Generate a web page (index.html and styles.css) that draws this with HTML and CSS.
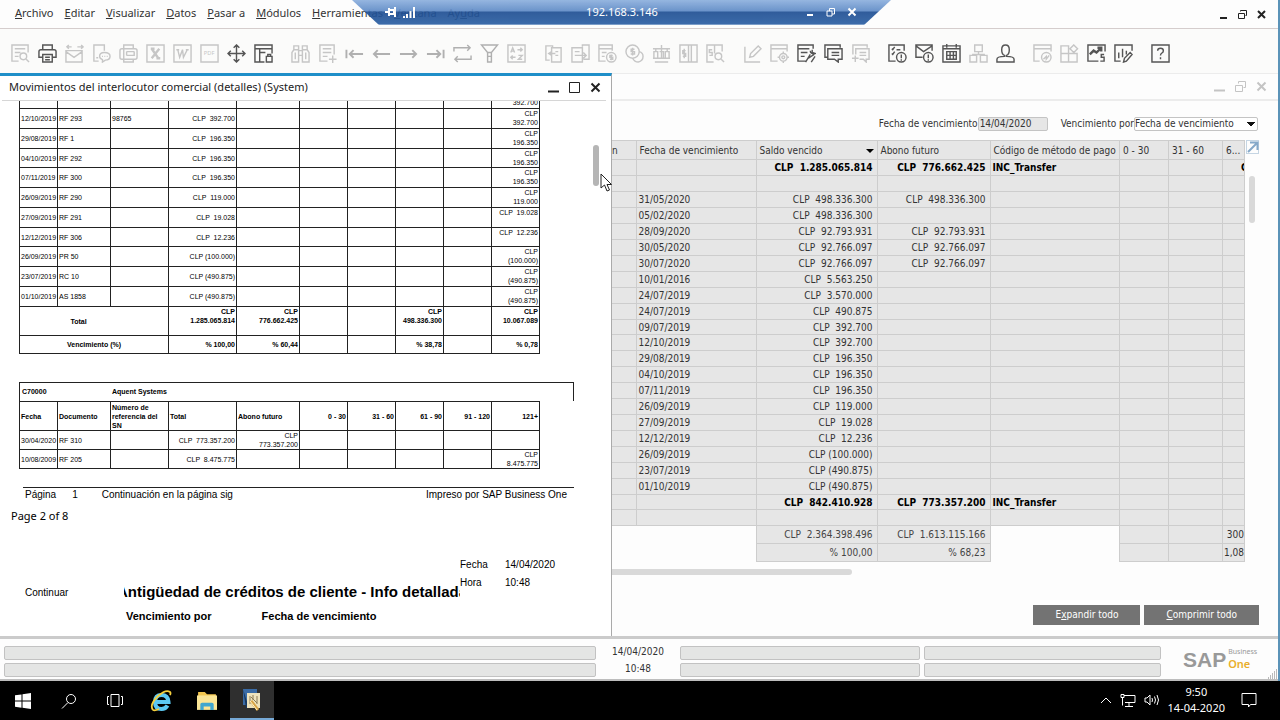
FILE: index.html
```html
<!DOCTYPE html>
<html lang="es">
<head>
    <meta charset="UTF-8">
    <meta name="viewport" content="width=device-width, initial-scale=1.0">
    <title>SAP Business One</title>
    <link rel="stylesheet" href="styles.css">
</head>
<body>
    <!-- Remote desktop connection bar -->
    <div class="remote-bar">
        <div class="remote-tools">
            <svg width="12" height="12" viewBox="0 0 12 12"><path d="M0 6h4M4 2v8M4 4h5v4H4M10 1v10"/></svg>
            <svg width="12" height="12" viewBox="0 0 12 12"><path d="M1 12V10M4 12V8M7.500 12V5M11 12V1"/></svg>
        </div>
        <span class="remote-host">192.168.3.146</span>
        <div class="remote-controls">
            <button type="button" aria-label="Minimizar"><svg width="10" height="10" viewBox="0 0 10 10"><path d="M2 8h6"/></svg></button>
            <button type="button" aria-label="Restaurar"><svg width="10" height="10" viewBox="0 0 10 10"><path class="thin" d="M1 4h5v5H1zM3.500 4V1.500h5V7H6"/></svg></button>
            <button type="button" aria-label="Cerrar"><svg width="10" height="10" viewBox="0 0 10 10"><path d="M1.500 1.500l7 7M8.500 1.500l-7 7"/></svg></button>
        </div>
    </div>

    <div class="app">
        <header class="menu-bar">
            <nav class="menu">
                <a href="#"><u>A</u>rchivo</a>
                <a href="#"><u>E</u>ditar</a>
                <a href="#"><u>V</u>isualizar</a>
                <a href="#"><u>D</u>atos</a>
                <a href="#"><u>P</u>asar a</a>
                <a href="#"><u>M</u>ódulos</a>
                <a href="#"><u>H</u>erramientas</a>
                <a href="#"><u>V</u>entana</a>
                <a href="#">Ay<u>u</u>da</a>
            </nav>
            <div class="window-controls">
                <button type="button" aria-label="Minimizar"><svg width="11" height="11" viewBox="0 0 11 11"><path d="M2 9h7"/></svg></button>
                <button type="button" aria-label="Restaurar"><svg width="11" height="11" viewBox="0 0 11 11"><path class="thin" d="M1.500 4.500h6v5h-6zM3.500 2.500v-1h6v5h-1"/></svg></button>
                <button type="button" aria-label="Cerrar"><svg width="11" height="11" viewBox="0 0 11 11"><path d="M2 2l7 7M9 2l-7 7"/></svg></button>
            </div>
        </header>

        <div class="toolbar">
            <div class="tool-group">
                <button type="button" class="tool off" aria-label="Vista preliminar"><svg viewBox="0 0 20 20"><path d="M8 18H1V1h17v8M4 5h11M4 9h6M4 13h4"/><circle cx="13" cy="13" r="3.500"/><path d="M16 16l3 3"/></svg></button>
                <button type="button" class="tool" aria-label="Imprimir"><svg viewBox="0 0 20 20"><path d="M5 6V1h10v5M5 14H1V8q0-2 2-2h14q2 0 2 2v6h-4M5 11h10v8H5zM7.500 14h5M7.500 16.500h5"/></svg></button>
                <button type="button" class="tool off" aria-label="Correo"><svg viewBox="0 0 20 20"><path d="M1 7h17v12H1zM1 8l8.500 6L18 8M2 3h5M13 3h6M4 1L2 3l2 2M17 1l2 2-2 2"/></svg></button>
                <button type="button" class="tool off" aria-label="SMS"><svg viewBox="0 0 20 20"><path d="M7 18H2V1h11v6M4.500 14.500h2M13 9q6 0 6 4t-5 4l-3 2v-2.500q-3-1-3-3.500 0-4 5-4zM10.500 13h1M13 13h1M15.500 13h1"/></svg></button>
                <button type="button" class="tool off" aria-label="Fax"><svg viewBox="0 0 20 20"><path d="M5 5V1h10v4M3 5h14q2 0 2 2v7q0 2-2 2H3q-2 0-2-2V7q0-2 2-2zM5 5v14h10v-3M8 8h8M8 12h8v-4M8 8v4"/></svg></button>
                <button type="button" class="tool off" aria-label="Excel"><svg viewBox="0 0 20 20"><path d="M1 1h18v18H1z"/><path class="thick" d="M6 5l7 10M14 5L6 15M5 5h4M11 15h4"/></svg></button>
                <button type="button" class="tool off" aria-label="Word"><svg viewBox="0 0 20 20"><path d="M1 1h18v18H1zM5 6l2 8 3-8 1 8 4-8M3.500 6h3M13.500 6h3"/></svg></button>
                <button type="button" class="tool off" aria-label="PDF"><svg viewBox="0 0 20 20"><path d="M1 1h18v18H1z"/><text x="4" y="12">PDF</text></svg></button>
                <button type="button" class="tool" aria-label="Mover"><svg viewBox="0 0 20 20"><path d="M10 1v18M1 10h18M7 4l3-3 3 3M7 16l3 3 3-3M4 7l-3 3 3 3M16 7l3 3-3 3"/></svg></button>
                <button type="button" class="tool" aria-label="Bloquear pantalla"><svg viewBox="0 0 20 20"><path d="M19 10V1H1v18h10M1 5h18M6 5v14M6 9h6M13 13h6v6h-6zM14.500 13v-2h3v2"/></svg></button>
            </div>
            <div class="tool-group">
                <button type="button" class="tool off" aria-label="Buscar"><svg viewBox="0 0 20 20"><path d="M1 19V9l2-3V2h5v17zM19 19V9l-2-3V2h-5v17zM8 7h4M8 12h4M3 6h5M12 6h5M4.500 9v7M15.500 9v7"/></svg></button>
                <button type="button" class="tool off" aria-label="Crear"><svg viewBox="0 0 20 20"><path d="M10 18H2V1h15v10M5 5h9M5 9h9M5 13h5M15.500 12v8M11.500 16h8"/></svg></button>
                <button type="button" class="tool off arrow" aria-label="Primer registro"><svg viewBox="0 0 20 20"><path d="M1.500 6v9M5 10.500h14M9 6.500l-4 4 4 4"/></svg></button>
                <button type="button" class="tool off arrow" aria-label="Registro anterior"><svg viewBox="0 0 20 20"><path d="M2 10.500h17M6 6.500l-4 4 4 4"/></svg></button>
                <button type="button" class="tool off arrow" aria-label="Registro siguiente"><svg viewBox="0 0 20 20"><path d="M1 10.500h17M14 6.500l4 4-4 4"/></svg></button>
                <button type="button" class="tool off arrow" aria-label="Último registro"><svg viewBox="0 0 20 20"><path d="M18.500 6v9M1 10.500h14M11 6.500l4 4-4 4"/></svg></button>
                <button type="button" class="tool off dark" aria-label="Actualizar"><svg viewBox="0 0 20 20"><path d="M1 8V4h17M15 1l3 3-3 3M19 12v4H2M5 13l-3 3 3 3"/></svg></button>
                <button type="button" class="tool off dark" aria-label="Filtrar"><svg viewBox="0 0 20 20"><path d="M1.500 1h17L12 9v10H8V9zM8 9h4M8 13h4"/></svg></button>
                <button type="button" class="tool off" aria-label="Clasificar"><svg viewBox="0 0 20 20"><path d="M1 1h18v18H1zM4 9l2-5 2 5M5 7.500h2M11 6h5M14 4l2 2-2 2M9 14H4M6 12l-2 2 2 2M12 12h4l-4 4h4"/></svg></button>
            </div>
            <div class="tool-group">
                <button type="button" class="tool off" aria-label="Documento base"><svg viewBox="0 0 20 20"><path d="M6 17H2V2h7v2M8 4h10v15H8zM5 10h7M8 8l-3 2 3 2M12 8h3M12 12h3"/></svg></button>
                <button type="button" class="tool off" aria-label="Documento destino"><svg viewBox="0 0 20 20"><path d="M12 3V1h7v15h-6M1 4h11v15H1zM4 8h5M4 12h12M13 9l3 3-3 3"/></svg></button>
                <button type="button" class="tool off" aria-label="Beneficio bruto"><svg viewBox="0 0 20 20"><path d="M8 18H1V1h14v6M1 5h14M4 9h5M4 13h3"/><circle cx="14" cy="14" r="5"/><path d="M15.500 12h-3v2h3v2h-3M14 11v6"/></svg></button>
                <button type="button" class="tool off" aria-label="Medios de pago"><svg viewBox="0 0 20 20"><circle cx="8" cy="8" r="7"/><path d="M15 8q4 1 4 5 0 5-5 6-4 0-6-4M10 5.500H6.500v2.500h3.500v2.500H6M8 4v8"/></svg></button>
                <button type="button" class="tool off" aria-label="Cálculo de volumen"><svg viewBox="0 0 20 20"><path d="M1 5h18M10 1v14M1 15h18M3 19h14M4 5v3M16 5v3M2 8h4v7H2zM14 8h4v7h-4zM8 8h4v7"/></svg></button>
                <button type="button" class="tool off" aria-label="Asiento"><svg viewBox="0 0 20 20"><path d="M1 1h18v18H1zM10 1v18M7 7H4v3h3v3H4M5.500 5v10M13 1v18"/></svg></button>
                <button type="button" class="tool off" aria-label="Detalle de asiento"><svg viewBox="0 0 20 20"><path d="M8 19H1V1h16v7M9 1v9M6.500 6h-3v3h3v3h-3"/><circle cx="13" cy="13" r="3.500"/><path d="M16 16l3 3"/></svg></button>
            </div>
            <div class="tool-group">
                <button type="button" class="tool off" aria-label="Editar diseño"><svg viewBox="0 0 20 20"><path d="M2 3v16h16M7 14l1-4 8-8 3 3-8 8z"/></svg></button>
                <button type="button" class="tool off" aria-label="Parametrizaciones"><svg viewBox="0 0 20 20"><path d="M8 18H1V1h17v7M1 5h17"/><circle cx="14" cy="14" r="4"/><circle cx="14" cy="14" r="1.500"/><path d="M14 8v2M14 18v2M8 14h2M18 14h2"/></svg></button>
                <button type="button" class="tool" aria-label="Diseñador de formularios"><svg viewBox="0 0 20 20"><path d="M9 18H1V1h16v4M1 5h12M4 9h7M4 13h4M9 19l5-8M14 7q0 4 5 3l-3-1V6M12 15l6-4M15 19l4-6"/></svg></button>
                <button type="button" class="tool" aria-label="Mensajes"><svg viewBox="0 0 20 20"><path d="M4 14H1V1h16v3M4 5h15v11h-4v3l-4-3H4zM8 9h8M8 12h8"/></svg></button>
                <button type="button" class="tool off" aria-label="Nuevo mensaje"><svg viewBox="0 0 20 20"><path d="M2 11V1h15v3M5 11V5h14v11h-3v3l-3-3H9M9 9h7M9 12h7M1 15h7M4.500 12v7"/></svg></button>
            </div>
            <div class="tool-group">
                <button type="button" class="tool" aria-label="Actividades"><svg viewBox="0 0 20 20"><path d="M8 18H1V1h16v6M4 5l1 1 2-3M4 10l1 1 2-3M9 6h4"/><circle cx="14" cy="14" r="5"/><path d="M14 11v4M14 16v1.500"/></svg></button>
                <button type="button" class="tool" aria-label="Alertas"><svg viewBox="0 0 20 20"><path d="M8 14H1V1h17v6M1 2l8 6 9-6"/><circle cx="14" cy="14" r="5"/><path d="M14 11v4M14 16v1.500"/></svg></button>
                <button type="button" class="tool" aria-label="Calendario"><svg viewBox="0 0 20 20"><path d="M1 2h18v17H1zM1 5h18M5 0v4M15 0v4M5 8h10v8H5zM5 12h10M8.500 8v8M12 8v8"/></svg></button>
                <button type="button" class="tool off" aria-label="Mapa de relaciones"><svg viewBox="0 0 20 20"><path d="M6 1h8v7H6zM1 12h7v7H1zM12 12h7v7h-7zM10 8v3M4 12v-1h12v1"/></svg></button>
                <button type="button" class="tool" aria-label="Empleado"><svg viewBox="0 0 20 20"><path d="M10 1q4 0 4 5t-3 6v1q8 0 8 3v3H1v-3q0-3 8-3v-1Q6 11 6 6t4-5z"/></svg></button>
            </div>
            <div class="tool-group">
                <button type="button" class="tool off" aria-label="Tablero"><svg viewBox="0 0 20 20"><path d="M7 18H1V1h18v7M1 5h18"/><circle cx="14" cy="14" r="5"/><path d="M11 16l3-3v3l3-4"/></svg></button>
                <button type="button" class="tool off" aria-label="Widgets"><svg viewBox="0 0 20 20"><path d="M1 2h8v8H1zM1 10h8v9H1zM9 10h9v9H9zM14.500 1l4 4-4 4-4-4z"/></svg></button>
                <button type="button" class="tool" aria-label="Análisis"><svg viewBox="0 0 20 20"><path d="M12 18H1V1h18v7M18 11h-3v3h3v4h-4"/><path class="thick" d="M3 11l4-4 3 2 5-5M11 4h4v4"/></svg></button>
                <button type="button" class="tool" aria-label="Gráficos"><svg viewBox="0 0 20 20"><path d="M7 18H1V1h18v6M5 15V9M9 14V5M13 11V7M10 19l1-4 6-6 2 2-6 7z"/></svg></button>
            </div>
            <div class="tool-group">
                <button type="button" class="tool" aria-label="Ayuda"><svg viewBox="0 0 20 20"><path d="M1 1h18v18H1zM7 7q0-2.500 3-2.500t3 2.500q0 1.500-1.500 2.500T10 12M10 14v2"/></svg></button>
            </div>
        </div>

        <main class="workspace">
            <section class="report-window">
                <div class="title-bar">
                    <h1>Movimientos del interlocutor comercial (detalles) (System)</h1>
                    <div class="window-controls">
                        <button type="button" aria-label="Minimizar"><svg width="11" height="11" viewBox="0 0 11 11"><path d="M0 9.500h11"/></svg></button>
                        <button type="button" aria-label="Maximizar"><svg width="11" height="11" viewBox="0 0 11 11"><path class="thin" d="M.5.500h10v10H.5z"/></svg></button>
                        <button type="button" aria-label="Cerrar"><svg width="11" height="11" viewBox="0 0 11 11"><path d="M1.500 1.500l8 8M9.500 1.500l-8 8"/></svg></button>
                    </div>
                </div>
                <div class="report-view">
                    <div class="report-page">
                        <table class="report-table scrolled">
                            <colgroup><col class="w-date"><col class="w-doc"><col class="w-ref"><col class="w-total"><col class="w-future"><col class="w-age"><col class="w-age"><col class="w-age"><col class="w-age"><col class="w-age"></colgroup>
                            <tbody>
                                <tr><td>09/07/2019</td><td>RF 289</td><td></td><td>CLP  392.700</td><td></td><td></td><td></td><td></td><td></td><td>CLP<br>392.700</td></tr>
                                <tr><td>12/10/2019</td><td>RF 293</td><td>98765</td><td>CLP  392.700</td><td></td><td></td><td></td><td></td><td></td><td>CLP<br>392.700</td></tr>
                                <tr><td>29/08/2019</td><td>RF 1</td><td></td><td>CLP  196.350</td><td></td><td></td><td></td><td></td><td></td><td>CLP<br>196.350</td></tr>
                                <tr><td>04/10/2019</td><td>RF 292</td><td></td><td>CLP  196.350</td><td></td><td></td><td></td><td></td><td></td><td>CLP<br>196.350</td></tr>
                                <tr><td>07/11/2019</td><td>RF 300</td><td></td><td>CLP  196.350</td><td></td><td></td><td></td><td></td><td></td><td>CLP<br>196.350</td></tr>
                                <tr><td>26/09/2019</td><td>RF 290</td><td></td><td>CLP  119.000</td><td></td><td></td><td></td><td></td><td></td><td>CLP<br>119.000</td></tr>
                                <tr><td>27/09/2019</td><td>RF 291</td><td></td><td>CLP  19.028</td><td></td><td></td><td></td><td></td><td></td><td>CLP  19.028</td></tr>
                                <tr><td>12/12/2019</td><td>RF 306</td><td></td><td>CLP  12.236</td><td></td><td></td><td></td><td></td><td></td><td>CLP  12.236</td></tr>
                                <tr><td>26/09/2019</td><td>PR 50</td><td></td><td>CLP (100.000)</td><td></td><td></td><td></td><td></td><td></td><td>CLP<br>(100.000)</td></tr>
                                <tr><td>23/07/2019</td><td>RC 10</td><td></td><td>CLP (490.875)</td><td></td><td></td><td></td><td></td><td></td><td>CLP<br>(490.875)</td></tr>
                                <tr><td>01/10/2019</td><td>AS 1858</td><td></td><td>CLP (490.875)</td><td></td><td></td><td></td><td></td><td></td><td>CLP<br>(490.875)</td></tr>
                            </tbody>
                            <tfoot>
                                <tr class="sum"><th colspan="3">Total</th><td>CLP<br>1.285.065.814</td><td>CLP<br>776.662.425</td><td></td><td></td><td>CLP<br>498.336.300</td><td></td><td>CLP<br>10.067.089</td></tr>
                                <tr class="percent"><th colspan="3">Vencimiento (%)</th><td>% 100,00</td><td>% 60,44</td><td></td><td></td><td>% 38,78</td><td></td><td>% 0,78</td></tr>
                            </tfoot>
                        </table>

                        <div class="partner">
                            <span class="partner-code">C70000</span>
                            <span>Aquent Systems</span>
                        </div>
                        <table class="report-table compact">
                            <colgroup><col class="w-date"><col class="w-doc"><col class="w-ref"><col class="w-total"><col class="w-future"><col class="w-age"><col class="w-age"><col class="w-age"><col class="w-age"><col class="w-age"></colgroup>
                            <thead>
                                <tr><th>Fecha</th><th>Documento</th><th>Número de referencia del SN</th><th>Total</th><th>Abono futuro</th><th>0 - 30</th><th>31 - 60</th><th>61 - 90</th><th>91 - 120</th><th>121+</th></tr>
                            </thead>
                            <tbody>
                                <tr><td>30/04/2020</td><td>RF 310</td><td></td><td>CLP  773.357.200</td><td>CLP<br>773.357.200</td><td></td><td></td><td></td><td></td><td></td></tr>
                                <tr><td>10/08/2009</td><td>RF 205</td><td></td><td>CLP  8.475.775</td><td></td><td></td><td></td><td></td><td></td><td>CLP<br>8.475.775</td></tr>
                            </tbody>
                        </table>

                        <div class="page-footer">
                            <span>Página</span>
                            <span>1</span>
                            <span>Continuación en la página sig</span>
                            <span class="printed-by">Impreso por SAP Business One</span>
                        </div>
                    </div>
                    <p class="page-count">Page 2 of 8</p>

                    <div class="next-page">
                        <span class="continued">Continuar</span>
                        <div class="next-title">
                            <h2><span>Antigüedad de créditos de cliente - Info detallada</span></h2>
                            <p><span>Vencimiento por</span><span>Fecha de vencimiento</span></p>
                        </div>
                        <dl class="printed-at">
                            <dt>Fecha</dt><dd>14/04/2020</dd>
                            <dt>Hora</dt><dd>10:48</dd>
                        </dl>
                    </div>
                    <div class="scroll-thumb report-thumb"></div>
                </div>
            </section>

            <section class="aging-window">
                <div class="title-bar">
                    <div class="window-controls">
                        <button type="button" aria-label="Minimizar"><svg width="11" height="11" viewBox="0 0 11 11"><path d="M0 9.500h11"/></svg></button>
                        <button type="button" aria-label="Restaurar"><svg width="11" height="11" viewBox="0 0 11 11"><path class="thin" d="M.5 4.500h7v6h-7zM3.500 2.500v-2h7v6h-2"/></svg></button>
                        <button type="button" aria-label="Cerrar"><svg width="11" height="11" viewBox="0 0 11 11"><path d="M1.500 1.500l8 8M9.500 1.500l-8 8"/></svg></button>
                    </div>
                </div>
                <form class="filters">
                    <label for="dueDate">Fecha de vencimiento</label>
                    <input id="dueDate" type="text" value="14/04/2020" readonly>
                    <label for="dueBy" class="second">Vencimiento por</label>
                    <select id="dueBy"><option>Fecha de vencimiento</option></select>
                </form>
                <div class="grid-area">
                    <table class="aging-table">
                        <colgroup><col class="a-first"><col class="a-due"><col class="a-balance"><col class="a-future"><col><col class="a-30"><col class="a-60"><col class="a-90"></colgroup>
                        <thead>
                            <tr><th>n</th><th>Fecha de vencimiento</th><th class="sorted">Saldo vencido</th><th>Abono futuro</th><th>Código de método de pago</th><th>0 - 30</th><th>31 - 60</th><th>6...</th></tr>
                        </thead>
                        <tbody>
                            <tr class="group"><td></td><td></td><td>CLP  1.285.065.814</td><td>CLP  776.662.425</td><td>INC_Transfer</td><td></td><td></td><td class="cut">CLP</td></tr>
                            <tr><td></td><td></td><td></td><td></td><td></td><td></td><td></td><td></td></tr>
                            <tr><td></td><td>31/05/2020</td><td>CLP  498.336.300</td><td>CLP  498.336.300</td><td></td><td></td><td></td><td></td></tr>
                            <tr><td></td><td>05/02/2020</td><td>CLP  498.336.300</td><td></td><td></td><td></td><td></td><td></td></tr>
                            <tr><td></td><td>28/09/2020</td><td>CLP  92.793.931</td><td>CLP  92.793.931</td><td></td><td></td><td></td><td></td></tr>
                            <tr><td></td><td>30/05/2020</td><td>CLP  92.766.097</td><td>CLP  92.766.097</td><td></td><td></td><td></td><td></td></tr>
                            <tr><td></td><td>30/07/2020</td><td>CLP  92.766.097</td><td>CLP  92.766.097</td><td></td><td></td><td></td><td></td></tr>
                            <tr><td></td><td>10/01/2016</td><td>CLP  5.563.250</td><td></td><td></td><td></td><td></td><td></td></tr>
                            <tr><td></td><td>24/07/2019</td><td>CLP  3.570.000</td><td></td><td></td><td></td><td></td><td></td></tr>
                            <tr><td></td><td>24/07/2019</td><td>CLP  490.875</td><td></td><td></td><td></td><td></td><td></td></tr>
                            <tr><td></td><td>09/07/2019</td><td>CLP  392.700</td><td></td><td></td><td></td><td></td><td></td></tr>
                            <tr><td></td><td>12/10/2019</td><td>CLP  392.700</td><td></td><td></td><td></td><td></td><td></td></tr>
                            <tr><td></td><td>29/08/2019</td><td>CLP  196.350</td><td></td><td></td><td></td><td></td><td></td></tr>
                            <tr><td></td><td>04/10/2019</td><td>CLP  196.350</td><td></td><td></td><td></td><td></td><td></td></tr>
                            <tr><td></td><td>07/11/2019</td><td>CLP  196.350</td><td></td><td></td><td></td><td></td><td></td></tr>
                            <tr><td></td><td>26/09/2019</td><td>CLP  119.000</td><td></td><td></td><td></td><td></td><td></td></tr>
                            <tr><td></td><td>27/09/2019</td><td>CLP  19.028</td><td></td><td></td><td></td><td></td><td></td></tr>
                            <tr><td></td><td>12/12/2019</td><td>CLP  12.236</td><td></td><td></td><td></td><td></td><td></td></tr>
                            <tr><td></td><td>26/09/2019</td><td>CLP (100.000)</td><td></td><td></td><td></td><td></td><td></td></tr>
                            <tr><td></td><td>23/07/2019</td><td>CLP (490.875)</td><td></td><td></td><td></td><td></td><td></td></tr>
                            <tr><td></td><td>01/10/2019</td><td>CLP (490.875)</td><td></td><td></td><td></td><td></td><td></td></tr>
                            <tr class="group"><td></td><td></td><td>CLP  842.410.928</td><td>CLP  773.357.200</td><td>INC_Transfer</td><td></td><td></td><td></td></tr>
                            <tr><td></td><td></td><td></td><td></td><td></td><td></td><td></td><td></td></tr>
                        </tbody>
                        <tfoot>
                            <tr><td class="blank" colspan="2"></td><td>CLP  2.364.398.496</td><td>CLP  1.613.115.166</td><td class="blank"></td><td></td><td></td><td class="end">300</td></tr>
                            <tr><td class="blank" colspan="2"></td><td>% 100,00</td><td>% 68,23</td><td class="blank"></td><td></td><td></td><td class="end">1,08</td></tr>
                        </tfoot>
                    </table>
                    <div class="grid-side">
                        <button type="button" class="expand" aria-label="Ampliar"><svg width="12" height="12" viewBox="0 0 12 12"><path d="M1 11l9-9M3 1.500h7.500V9"/></svg></button>
                        <div class="scroll-thumb grid-thumb"></div>
                    </div>
                </div>
                <div class="h-thumb"></div>
                <div class="actions">
                    <button type="button">E<u>x</u>pandir todo</button>
                    <button type="button"><u>C</u>omprimir todo</button>
                </div>
            </section>

            <svg class="pointer" width="12" height="19" viewBox="0 0 12 19"><path d="M1 1v14l3.500-3 2.500 6 2.500-1L7 11.500h4.500z"/></svg>
        </main>

        <footer class="status-bar">
            <div class="status-fields">
                <input type="text" aria-label="Mensaje" readonly>
                <span>14/04/2020</span>
                <input type="text" aria-label="Estado 1" readonly>
                <input type="text" aria-label="Estado 2" readonly>
                <input type="text" aria-label="Detalle" readonly>
                <span>10:48</span>
                <input type="text" aria-label="Estado 3" readonly>
                <input type="text" aria-label="Estado 4" readonly>
            </div>
            <div class="logo">
                <strong>SAP</strong>
                <span class="logo-name"><span>Business</span><b>One</b></span>
            </div>
            <svg class="grip" width="12" height="12" viewBox="0 0 12 12"><path d="M2 11h10M4 9h8M6 7h6M8 5h4M10 3h2"/></svg>
        </footer>
    </div>

    <div class="taskbar">
        <button type="button" class="task" aria-label="Inicio"><svg width="16" height="16" viewBox="0 0 16 16"><path fill="#fff" d="M0 2.300L6.500 1.400v6.200H0zM7.500 1.200L16 0v7.600H7.500zM0 8.500h6.500v6.200L0 13.800zM7.500 8.500H16V16l-8.500-1.200z"/></svg></button>
        <button type="button" class="task" aria-label="Buscar"><svg class="line" width="16" height="16" viewBox="0 0 16 16"><circle cx="10" cy="6" r="4.500"/><path d="M7 9.500L1 15.500"/></svg></button>
        <button type="button" class="task" aria-label="Vista de tareas"><svg class="line" width="18" height="16" viewBox="0 0 18 16"><path d="M5 1.500h8v12H5zM3 3.500H1.500v8H3M15 3.500h1.500v8H15"/></svg></button>
        <button type="button" class="task" aria-label="Internet Explorer"><svg width="22" height="22" viewBox="0 0 22 22"><path class="ie-letter" d="M5 12h13.500Q18 5 11.500 5T5 12t6.500 7q4 0 6-3.500"/><path class="ie-ring" d="M3 20Q-1 15 8 6 16-1 20 2q1 1 0 3M3 20q2 1 6-1"/></svg></button>
        <button type="button" class="task" aria-label="Explorador"><svg width="20" height="20" viewBox="0 0 18 18"><path fill="#f3c64f" d="M1 1h6l2 2h8v4H1z"/><path fill="#fbe596" d="M0 4h18v13H0z"/><path fill="#40a6cf" d="M3 17v-5q0-1.500 1.500-1.500h9Q15 10.500 15 12v5h-3v-3H6v3z"/></svg></button>
        <button type="button" class="task active" aria-label="SAP Business One"><svg width="20" height="22" viewBox="0 0 20 22"><path fill="#3a6ba5" d="M1 0h14v16H1z"/><path fill="#17375f" d="M1 0l6 19H4z"/><path fill="#eee3bd" d="M5 4h13v15H5z"/><path class="sap-lines" d="M8 7v8M11 6v5M15 7v8M9 8l6 6"/><path class="sap-pencil" d="M9 12l7 9"/><path class="sap-shine" d="M8 12l7 9"/></svg></button>
        <div class="tray">
            <svg class="line" width="12" height="10" viewBox="0 0 12 10"><path d="M1 8l5-5 5 5"/></svg>
            <svg class="line" width="16" height="16" viewBox="0 0 16 16"><path d="M4 3.500h11v7H5M1 2.500h3v3H1zM2.500 5.500v8M9 11v3M5 14.500h8"/></svg>
            <svg class="line" width="16" height="14" viewBox="0 0 16 14"><path d="M1 5h2l3-3v10L3 9H1zM8 5q1 2 0 4M10.500 3.500q2 3.500 0 7M13 2q3 5 0 10"/></svg>
            <div class="clock"><span>9:50</span><span>14-04-2020</span></div>
            <svg class="line" width="16" height="16" viewBox="0 0 16 16"><path d="M1 1.500h14v11H9.500L7.500 15v-2.500H1z"/></svg>
        </div>
    </div>
</body>
</html>
```

FILE: styles.css
```css
:root {
    --ui-font: "Noto Sans", "Open Sans", sans-serif;
    --grid-font: "DejaVu Sans Condensed", "Noto Sans", sans-serif;
    --report-font: "Liberation Sans", Arial, sans-serif;
    --text-color: #333;
    --grid-color: #e6e6e6;
    --line-color: #cdcdcd;
    --accent-color: #1f8fc9;
}

* {
    box-sizing: border-box;
}

body {
    margin: 0;
    height: 100vh;
    display: flex;
    flex-direction: column;
    overflow: hidden;
    background-color: #fdfdfd;
    color: var(--text-color);
    font-family: var(--ui-font);
    font-size: 11px;
    line-height: 14px;
}

button {
    border: none;
    padding: 0;
    background: none;
    color: inherit;
    font: inherit;
    display: flex;
    align-items: center;
    justify-content: center;
}

svg {
    display: block;
    flex: none;
    fill: none;
    stroke: currentColor;
}

/* Remote desktop bar */
.remote-bar {
    position: absolute;
    z-index: 5;
    top: 0;
    left: 352px;
    width: 539px;
    height: 25px;
    padding: 0 32px 2px 33px;
    display: flex;
    align-items: center;
    justify-content: space-between;
    background: linear-gradient(#8db0de 0, #5f8bc6 11px, #1f4f93 12px, #2c5fa3 24px, #b8cce6 25px);
    opacity: 0.92;
    clip-path: polygon(0 0, 100% 0, 95% 100%, 5% 100%);
    color: #fff;
}

.remote-tools,
.remote-controls {
    width: 54px;
    display: flex;
    gap: 11px;
}

.remote-tools {
    gap: 6px;
}

.remote-bar svg {
    stroke-width: 2;
}

.remote-bar .thin {
    stroke-width: 1;
}

/* Application frame */
.app {
    flex: 1;
    min-height: 0;
    display: flex;
    flex-direction: column;
    border-right: 2px solid #5b93b8;
}

.menu-bar {
    height: 29px;
    padding: 0 11px 0 15px;
    display: flex;
    align-items: center;
    justify-content: space-between;
    border-bottom: 1px solid #d5cdcd;
}

.menu {
    display: flex;
    gap: 11px;
    padding-bottom: 2px;
}

.menu a {
    color: inherit;
    text-decoration: none;
}

.window-controls {
    display: flex;
    gap: 8px;
    color: #222;
}

.window-controls svg {
    stroke-width: 2;
}

.window-controls .thin {
    stroke-width: 1;
}

.toolbar {
    height: 44px;
    padding: 4px 7px 0;
    display: flex;
    align-items: center;
    gap: 10px;
    background-color: #fbfbfa;
}

.tool-group {
    display: flex;
}

.tool {
    width: 27px;
    height: 24px;
    color: #555;
}

.tool.off {
    color: #c6c6c6;
}

.tool svg {
    width: 19px;
    height: 19px;
    stroke-width: 1.500;
}

.tool.arrow svg {
    stroke-width: 2;
}

.tool.off.arrow,
.tool.off.dark {
    color: #b0b0b0;
}

.tool .thick {
    stroke-width: 2.500;
}

.tool text {
    fill: currentColor;
    stroke: none;
    font-size: 6px;
}

/* Windows */
.workspace {
    flex: 1;
    min-height: 0;
    display: flex;
    position: relative;
    border-bottom: 3px solid #cbcbcb;
}

.title-bar {
    display: flex;
    align-items: center;
    justify-content: space-between;
    flex: none;
}

.title-bar .window-controls {
    gap: 10px;
}

.report-window {
    flex: 0 0 612px;
    display: flex;
    flex-direction: column;
    border-top: 3px solid var(--accent-color);
    border-right: 1px solid #aaa;
    background-color: #fff;
    overflow: hidden;
}

.report-window .title-bar {
    height: 25px;
    margin: 0 5px 0 2px;
    padding: 0 5px 2px 7px;
    border-bottom: 1px solid #d6d6d6;
}

h1 {
    margin: 0;
    color: #222;
    font-size: 11px;
    font-weight: 400;
}

.report-view {
    flex: 1;
    min-height: 0;
    position: relative;
    overflow: hidden;
    font-family: var(--report-font);
    color: #000;
}

.report-page {
    padding: 0 37px 0 19px;
}

.report-table {
    table-layout: fixed;
    border-collapse: collapse;
    width: 521px;
    font-size: 7px;
    line-height: 9px;
    white-space: pre;
}

/* The report is scrolled part of a row down */
.report-table.scrolled {
    margin-top: -13px;
}

.w-date { width: 38px; }
.w-doc { width: 53px; }
.w-ref { width: 58px; }
.w-total { width: 68px; }
.w-future { width: 63px; }
.w-age { width: 48px; }

.report-table td,
.report-table th {
    height: 20px;
    padding: 0 1px;
    border: 1px solid #222;
    text-align: left;
}

.report-table tbody tr:nth-child(4n) td,
.report-table.compact tbody td {
    height: 19px;
}

.report-table td:nth-child(n+4) {
    text-align: right;
}

.report-table td:nth-child(n+5) {
    vertical-align: top;
}

.report-table thead th {
    height: 29px;
    white-space: normal;
}

.report-table thead th:nth-child(n+6) {
    text-align: right;
}

.report-table tfoot td,
.report-table tfoot th {
    height: 18px;
    text-align: center;
}

.report-table tfoot td {
    text-align: right;
    font-weight: 700;
}

.report-table .sum td {
    height: 29px;
    vertical-align: top;
}

.report-table .sum th {
    padding-right: 32px;
}

.report-table .percent td:nth-child(n) {
    vertical-align: middle;
}

.partner {
    height: 19px;
    margin-top: 28px;
    padding: 0 2px;
    display: flex;
    align-items: center;
    border: 1px solid #222;
    border-bottom: none;
    font-size: 7px;
    font-weight: 700;
}

.partner-code {
    width: 90px;
}

.page-footer {
    margin: 18px 0 0 4px;
    padding: 0 7px 0 2px;
    display: flex;
    gap: 16px;
    border-top: 1px solid #222;
    font-size: 10px;
}

.page-footer span:nth-child(3) {
    padding-left: 8px;
}

.printed-by {
    margin-left: auto;
}

.page-count {
    margin: 7px 0 0 11px;
    font-family: var(--ui-font);
    font-size: 11px;
}

.next-page {
    margin-top: 35px;
    padding-left: 25px;
    display: flex;
    align-items: flex-start;
    font-size: 10px;
}

.continued {
    width: 99px;
    padding-top: 28px;
}

.next-title {
    width: 336px;
    padding-top: 24px;
}

/* Title is wider than its frame and gets clipped on both sides */
.next-title h2 {
    margin: 0;
    display: flex;
    justify-content: center;
    overflow: hidden;
    white-space: nowrap;
    font-size: 15px;
    line-height: 20px;
}

.next-title p {
    margin: 7px 0 0 2px;
    display: flex;
    gap: 50px;
    font-size: 11px;
    font-weight: 700;
}

.printed-at {
    margin: 0;
    display: grid;
    grid-template-columns: 45px auto;
    row-gap: 4px;
}

.printed-at dd {
    margin: 0;
}

.scroll-thumb {
    width: 6px;
    border-radius: 3px;
    background-color: #d9d9d9;
}

.report-thumb {
    position: absolute;
    top: 44px;
    right: 12px;
    height: 41px;
    background-color: #b5b5b5;
}

.pointer {
    position: absolute;
    top: 100px;
    left: 600px;
    fill: #fff;
    stroke: #222;
}

/* Aging window */
.aging-window {
    flex: 1;
    min-width: 0;
    display: flex;
    flex-direction: column;
    font-family: var(--grid-font);
    font-size: 10px;
}

.aging-window .title-bar {
    height: 28px;
    padding-right: 11px;
    justify-content: flex-end;
    border-bottom: 2px solid #ececec;
    border-top: 1px solid #ececec;
}

.aging-window .window-controls {
    color: #c4c4c4;
}

.filters {
    padding: 16px 20px 0 0;
    height: 39px;
    display: flex;
    justify-content: flex-end;
    align-items: flex-start;
}

.filters .second {
    margin-left: 13px;
}

.filters input,
.filters select {
    height: 14px;
    padding: 0 1px;
    border: 1px solid #c4c4c4;
    border-radius: 2px;
    background-color: #fff;
    color: inherit;
    font: inherit;
}

.filters input {
    width: 70px;
    background-color: #e6e6e6;
}

.filters select {
    width: 124px;
    padding: 0;
    appearance: none;
    background-image: linear-gradient(45deg, transparent 50%, #111 50%), linear-gradient(-45deg, transparent 50%, #111 50%);
    background-size: 4px 4px;
    background-position: right 6px top 4px, right 2px top 4px;
    background-repeat: no-repeat;
    line-height: 12px;
}

.grid-area {
    display: flex;
}

.aging-table {
    flex: 1;
    width: 0;
    table-layout: fixed;
    border-collapse: collapse;
    line-height: 13px;
    white-space: pre;
}

.a-first { width: 24px; }
.a-due { width: 120px; }
.a-balance { width: 121px; }
.a-future { width: 113px; }
.a-30 { width: 49px; }
.a-60 { width: 54px; }
.a-90 { width: 22px; }

.aging-table td,
.aging-table th {
    height: 16px;
    padding: 0 4px 0 2px;
    border: 1px solid var(--line-color);
    background-color: var(--grid-color);
    overflow: hidden;
    text-align: left;
    font-weight: 400;
}

.aging-table tr > :first-child {
    border-left: none;
}

.aging-table th {
    height: 19px;
    padding: 0 3px;
}

.aging-table th:first-child {
    padding-left: 0;
}

.aging-table tbody tr:nth-child(11n) td {
    height: 15px;
}

.aging-table td:nth-child(3),
.aging-table td:nth-child(4) {
    text-align: right;
}

.aging-table .group td {
    color: #000;
    font-weight: 700;
}

.aging-table .group .cut {
    padding: 0 0 0 18px;
}

.aging-table tfoot td {
    height: 18px;
    text-align: right;
}

.aging-table tfoot td:nth-child(2),
.aging-table tfoot td:nth-child(3) {
    color: #444;
}

.aging-table tfoot .blank {
    border: none;
    background: none;
}

.aging-table tfoot .end {
    padding: 0;
}

.sorted::after {
    content: "";
    float: right;
    margin: 5px 0 0;
    border: 4px solid transparent;
    border-top-color: #000;
    border-bottom: none;
}

.grid-side {
    width: 33px;
    padding-left: 1px;
}

.expand {
    width: 13px;
    height: 14px;
    border: 1px solid #c5d5e3;
    color: #86a9c9;
}

.expand svg {
    stroke-width: 2;
}

.grid-thumb {
    height: 47px;
    margin: 22px 0 0 3px;
}

.h-thumb {
    width: 240px;
    height: 6px;
    margin-top: 7px;
    border-radius: 0 3px 3px 0;
    background-color: #d9d9d9;
}

.actions {
    margin: 30px 19px 0;
    display: flex;
    justify-content: flex-end;
    gap: 4px;
}

.actions button {
    height: 20px;
    padding: 0 22px;
    background-color: #737373;
    color: #fff;
    font-family: var(--grid-font);
}

/* Status bar */
.status-bar {
    height: 42px;
    padding: 7px 0 0 4px;
    display: flex;
    position: relative;
    border-bottom: 2px solid #bdbdbd;
    font-family: var(--grid-font);
    font-size: 10px;
}

.status-fields {
    flex: 1;
    display: grid;
    grid-template-columns: 592fr 76px 240fr 237fr;
    grid-auto-rows: 14px;
    gap: 3px 4px;
}

.status-fields span {
    line-height: 12px;
    text-align: center;
}

.status-fields input {
    width: 100%;
    min-width: 0;
    height: 14px;
    border: 1px solid #c2c2c2;
    border-radius: 2px;
    background-color: #e4e5e4;
}

.logo {
    width: 117px;
    padding: 1px 0 0 22px;
    display: flex;
    align-items: flex-start;
    gap: 2px;
    color: #999;
    font-family: var(--report-font);
}

.logo strong {
    font-size: 21px;
    line-height: 26px;
}

.logo-name {
    display: flex;
    flex-direction: column;
    font-family: var(--ui-font);
    font-size: 7px;
    line-height: 10px;
}

.logo-name b {
    color: #e9ae2b;
    font-size: 11px;
    font-weight: 600;
    line-height: 14px;
}

.grip {
    position: absolute;
    right: 0;
    bottom: 0;
    color: #777;
    stroke-dasharray: 1 1;
}

/* Taskbar */
.taskbar {
    height: 39px;
    display: flex;
    background-color: #000;
    color: #fff;
}

.task {
    width: 46px;
}

.task svg:not(.line) {
    stroke: none;
}

.task .ie-letter {
    stroke: #5cc8f2;
    stroke-width: 4;
}

.task .ie-ring {
    stroke: #f5cf3d;
    stroke-width: 1.800;
}

.task .sap-lines {
    stroke: #8c7b54;
}

.task .sap-pencil {
    stroke: #d8a446;
    stroke-width: 3;
}

.task .sap-shine {
    stroke: #fff3c7;
}

.task.active {
    width: 44px;
    border-bottom: 2px solid #76a9d6;
    background-color: #2f2f2f;
}

.tray {
    margin-left: auto;
    padding: 0 23px 2px 0;
    display: flex;
    align-items: center;
    gap: 8px;
}

.clock {
    display: flex;
    flex-direction: column;
    align-items: center;
    line-height: 16px;
    margin-right: 8px;
}
```
